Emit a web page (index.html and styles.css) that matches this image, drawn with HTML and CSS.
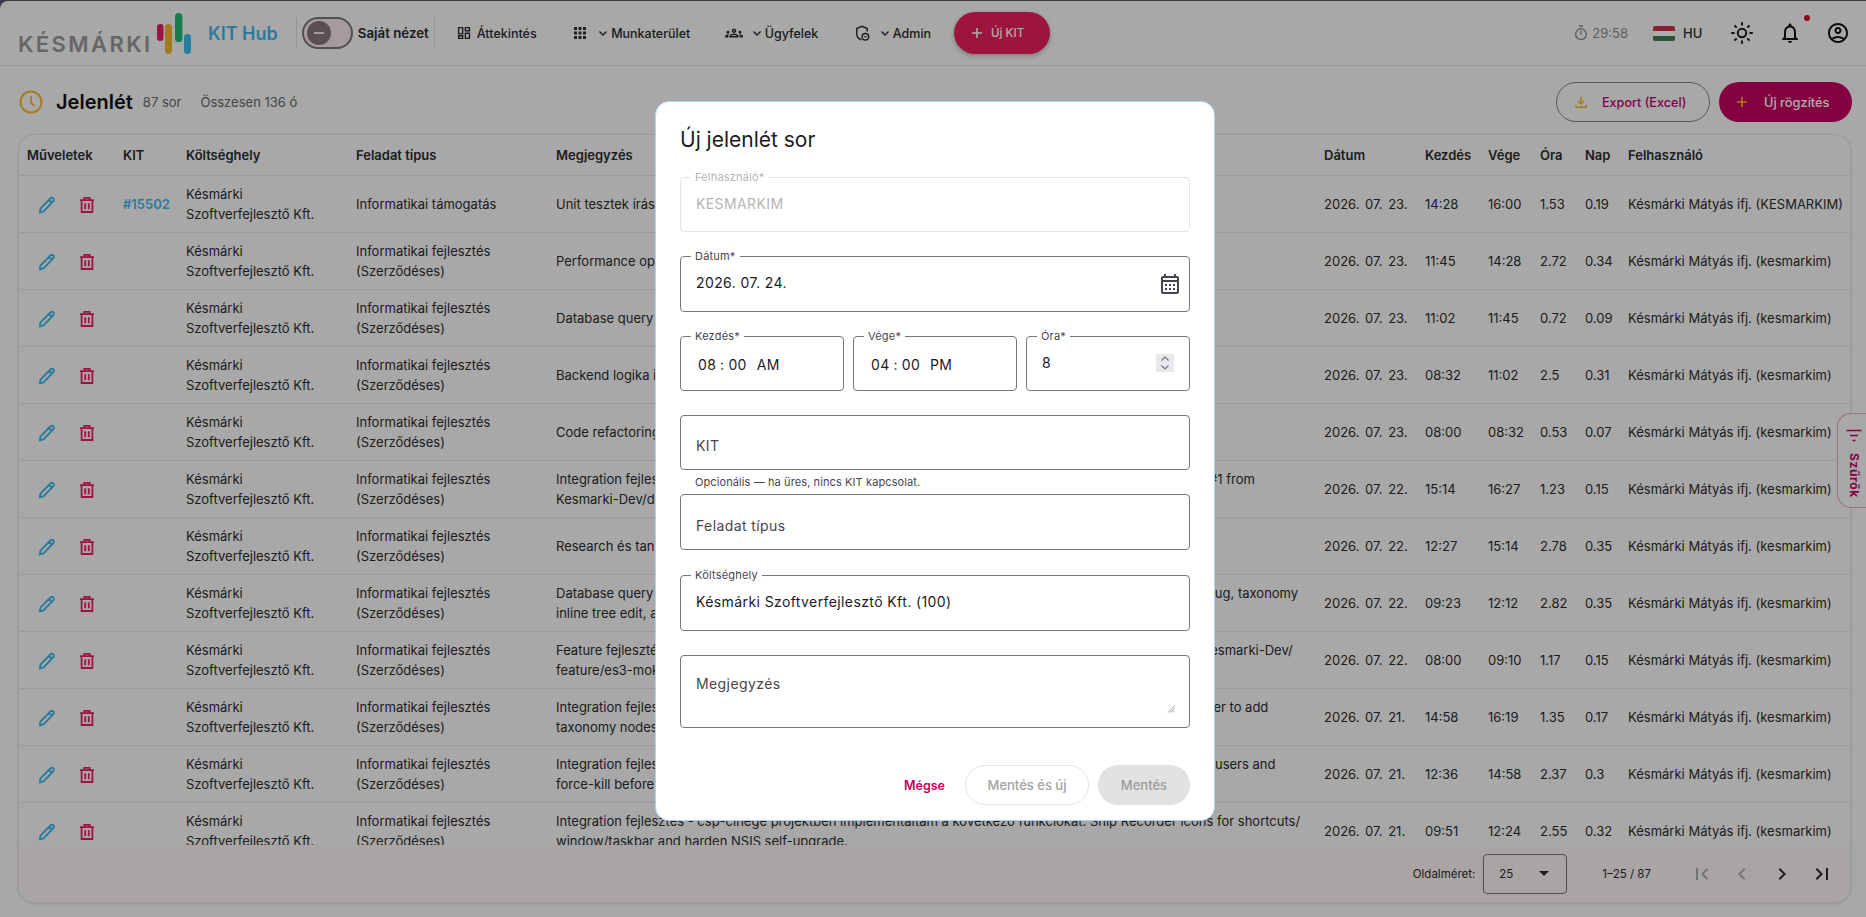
FILE: index.html
```html
<!DOCTYPE html>
<html lang="hu">
<head>
    <meta charset="UTF-8">
    <meta name="viewport" content="width=device-width, initial-scale=1.0">
    <title>Jelenlét - KIT Hub</title>
    <link rel="stylesheet" href="styles.css">
</head>
<body>
    <svg class="icon-defs" aria-hidden="true">
        <symbol id="i-edit" viewBox="0 0 16 16"><path d="M1.6 14.6l.7-3.6L11 2.200c.8-.8 1.900-.8 2.600-.1s.7 1.800-.1 2.600L4.900 13.600z M9.800 3.400l2.900 2.900" fill="none" stroke="currentColor" stroke-width="1.700" stroke-linejoin="round"/></symbol>
        <symbol id="i-trash" viewBox="0 0 16 16"><path d="M3.200 4v10.200h9.600V4 M1.800 3.600h12.400 M5.600 3.400V1.600h4.800v1.800 M6.400 6.400v5.400 M9.600 6.400v5.400" fill="none" stroke="currentColor" stroke-width="1.600"/></symbol>
        <symbol id="i-chev" viewBox="0 0 12 12"><path d="M2.500 4.500L6 8l3.500-3.500" fill="none" stroke="currentColor" stroke-width="1.400"/></symbol>
        <symbol id="i-plus" viewBox="0 0 18 18"><path d="M9 4v10M4 9h10" fill="none" stroke="currentColor" stroke-width="1.600"/></symbol>
    </svg>

    <div class="app">
        <header class="topbar">
            <a class="logo">
                <span class="logo-word">KÉSMÁRKI</span>
                <svg class="logo-bars" viewBox="0 0 34 41">
                    <rect class="bar-red" x="0" y="11" width="6.500" height="17" rx="3.200"/>
                    <rect class="bar-yellow" x="8" y="11" width="7" height="30" rx="3.400"/>
                    <rect class="bar-green" x="18" y="0" width="7.400" height="29" rx="3.600"/>
                    <rect class="bar-blue" x="27" y="21" width="7" height="20" rx="3.400"/>
                </svg>
            </a>
            <span class="app-name">KIT Hub</span>
            <span class="divider divider-first"></span>
            <span class="toggle"><span class="toggle-thumb"></span></span>
            <span class="toggle-label">Saját nézet</span>
            <span class="divider divider-second"></span>
            <nav class="nav">
                <a class="nav-item">
                    <svg class="icon" viewBox="0 0 24 24"><path d="M4.800 4.800h5.400v8.400H4.800z M13.800 4.800h5.400v4.200h-5.400z M13.800 12.400h5.400v6.800h-5.400z M4.800 15.600h5.400v3.600H4.800z" fill="none" stroke="currentColor" stroke-width="1.900"/></svg>
                    <span class="nav-text nav-text-plain">Áttekintés</span>
                </a>
                <a class="nav-item">
                    <svg class="icon" viewBox="0 0 24 24"><path d="M4 8h4V4H4v4zm6 12h4v-4h-4v4zm-6 0h4v-4H4v4zm0-6h4v-4H4v4zm6 0h4v-4h-4v4zm6-10v4h4V4h-4zm-6 4h4V4h-4v4zm6 6h4v-4h-4v4zm0 6h4v-4h-4v4z" fill="currentColor"/></svg>
                    <svg class="chev"><use href="#i-chev"/></svg>
                    <span class="nav-text">Munkaterület</span>
                </a>
                <a class="nav-item">
                    <svg class="icon" viewBox="0 0 24 24"><path d="M4 13c1.100 0 2-.9 2-2s-.9-2-2-2-2 .9-2 2 .9 2 2 2zm1.130 1.100c-.37-.06-.74-.1-1.130-.1-.99 0-1.930.21-2.780.58C.48 14.900 0 15.620 0 16.430V18h4.500v-1.610c0-.83.23-1.610.63-2.290zM20 13c1.100 0 2-.9 2-2s-.9-2-2-2-2 .9-2 2 .9 2 2 2zm4 3.430c0-.81-.48-1.530-1.220-1.850-.85-.37-1.790-.58-2.780-.58-.39 0-.76.04-1.130.1.4.68.63 1.460.63 2.290V18H24v-1.570zm-7.760-2.780c-1.170-.52-2.610-.9-4.240-.9-1.630 0-3.070.39-4.240.9C6.680 14.130 6 15.210 6 16.390V18h12v-1.610c0-1.180-.68-2.260-1.760-2.740zM8.070 16c.09-.23.13-.39.91-.69.97-.38 1.990-.56 3.020-.56s2.050.18 3.020.56c.77.3.81.46.91.69H8.070zM12 8c.55 0 1 .45 1 1s-.45 1-1 1-1-.45-1-1 .45-1 1-1m0-2c-1.660 0-3 1.340-3 3s1.340 3 3 3 3-1.340 3-3-1.340-3-3-3z" fill="currentColor"/></svg>
                    <svg class="chev"><use href="#i-chev"/></svg>
                    <span class="nav-text">Ügyfelek</span>
                </a>
                <a class="nav-item">
                    <svg class="icon" viewBox="0 0 24 24"><path d="M11 21c-3.600-1.200-6-4.600-6-8.400V6l7-3 7 3v4" fill="none" stroke="currentColor" stroke-width="1.900"/><circle cx="16.500" cy="17" r="4.400" fill="none" stroke="currentColor" stroke-width="1.900"/><path d="M14.600 17h3.800" stroke="currentColor" stroke-width="1.600"/></svg>
                    <svg class="chev"><use href="#i-chev"/></svg>
                    <span class="nav-text">Admin</span>
                </a>
            </nav>
            <button class="btn-new-kit"><svg class="btn-icon"><use href="#i-plus"/></svg>Új KIT</button>

            <div class="topbar-right">
                <span class="session">
                    <svg class="session-icon" viewBox="0 0 14 16"><circle cx="7" cy="9.200" r="5.400" fill="none" stroke="currentColor" stroke-width="1.400"/><path d="M4.800 1h4.400M7 5.800v3.600" fill="none" stroke="currentColor" stroke-width="1.400"/></svg>
                    29:58
                </span>
                <svg class="flag" viewBox="0 0 22 15">
                    <rect class="flag-red" width="22" height="5" y="0"/>
                    <rect class="flag-white" width="22" height="5" y="5"/>
                    <rect class="flag-green" width="22" height="5" y="10"/>
                </svg>
                <span class="lang">HU</span>
                <svg class="top-icon top-icon-sun" viewBox="0 0 24 24"><circle cx="12" cy="12" r="4.200" fill="none" stroke="currentColor" stroke-width="1.900"/><path d="M12 1.200v3.400M12 19.400v3.400M1.200 12h3.400M19.400 12h3.400M4.400 4.400l2.300 2.300M17.300 17.300l2.300 2.300M4.400 19.600l2.300-2.300M17.300 6.700l2.300-2.300" fill="none" stroke="currentColor" stroke-width="1.900"/></svg>
                <span class="bell">
                    <svg class="top-icon" viewBox="0 0 24 24"><path d="M12 22c1.100 0 2-.9 2-2h-4c0 1.100.9 2 2 2zm6-6v-5c0-3.070-1.630-5.640-4.500-6.320V4c0-.83-.67-1.500-1.500-1.500s-1.500.67-1.500 1.500v.68C7.640 5.360 6 7.920 6 11v5l-2 2v1h16v-1l-2-2zm-2 1H8v-6c0-2.480 1.510-4.500 4-4.500s4 2.020 4 4.500v6z" fill="currentColor"/></svg>
                    <span class="bell-dot"></span>
                </span>
                <svg class="top-icon" viewBox="0 0 24 24"><path d="M12 2C6.480 2 2 6.480 2 12s4.480 10 10 10 10-4.480 10-10S17.520 2 12 2zM7.350 18.500C8.660 17.560 10.260 17 12 17s3.340.56 4.650 1.500C15.340 19.440 13.740 20 12 20s-3.340-.56-4.650-1.500zm10.790-1.380C16.450 15.800 14.320 15 12 15s-4.450.8-6.140 2.120C4.700 15.730 4 13.950 4 12c0-4.420 3.580-8 8-8s8 3.580 8 8c0 1.950-.7 3.730-1.860 5.120zM12 6c-1.930 0-3.500 1.570-3.500 3.500S10.070 13 12 13s3.500-1.570 3.500-3.500S13.930 6 12 6zm0 5c-.83 0-1.500-.67-1.500-1.500S11.170 8 12 8s1.500.67 1.500 1.500S12.830 11 12 11z" fill="currentColor"/></svg>
            </div>
        </header>

        <main class="page">
            <div class="page-head">
                <div class="page-title">
                    <svg class="title-icon" viewBox="0 0 24 24"><circle cx="12" cy="12" r="10.500" fill="none" stroke="currentColor" stroke-width="2"/><path d="M12 6v6.400l3 3.600" fill="none" stroke="currentColor" stroke-width="1.800"/></svg>
                    <h1>Jelenlét</h1>
                    <span class="page-count">87 sor</span>
                    <span class="page-sum">Összesen 136 ó</span>
                </div>
                <div class="page-actions">
                    <button class="btn-export">
                        <svg class="btn-icon amber" viewBox="0 0 18 18"><path d="M9 3.500v7M6 8l3 3 3-3M4 12v2.200h10V12" fill="none" stroke="currentColor" stroke-width="1.500"/></svg>
                        Export (Excel)
                    </button>
                    <button class="btn-add"><svg class="btn-icon amber"><use href="#i-plus"/></svg>Új rögzítés</button>
                </div>
            </div>

            <section class="card">
                <div class="table-wrap">
                    <table class="grid">
                        <colgroup>
                            <col class="c-act"><col class="c-kit"><col class="c-cost"><col class="c-type"><col class="c-note">
                            <col class="c-date"><col class="c-start"><col class="c-end"><col class="c-hour"><col class="c-day"><col class="c-user">
                        </colgroup>
                        <thead>
                            <tr><th>Műveletek</th><th>KIT</th><th>Költséghely</th><th>Feladat típus</th><th>Megjegyzés</th><th>Dátum</th><th>Kezdés</th><th>Vége</th><th>Óra</th><th>Nap</th><th>Felhasználó</th></tr>
                        </thead>
                        <tbody>
                            <tr>
                                <td class="actions"><svg class="a-edit"><use href="#i-edit"/></svg><svg class="a-del"><use href="#i-trash"/></svg></td>
                                <td><a class="kit-link">#15502</a></td>
                                <td>Késmárki Szoftverfejlesztő Kft.</td>
                                <td>Informatikai támogatás</td>
                                <td>Unit tesztek írása</td>
                                <td>2026. 07. 23.</td><td>14:28</td><td>16:00</td><td>1.53</td><td>0.19</td><td>Késmárki Mátyás ifj. (KESMARKIM)</td>
                            </tr>
                            <tr>
                                <td class="actions"><svg class="a-edit"><use href="#i-edit"/></svg><svg class="a-del"><use href="#i-trash"/></svg></td>
                                <td></td>
                                <td>Késmárki Szoftverfejlesztő Kft.</td>
                                <td>Informatikai fejlesztés (Szerződéses)</td>
                                <td>Performance optimalizálás</td>
                                <td>2026. 07. 23.</td><td>11:45</td><td>14:28</td><td>2.72</td><td>0.34</td><td>Késmárki Mátyás ifj. (kesmarkim)</td>
                            </tr>
                            <tr>
                                <td class="actions"><svg class="a-edit"><use href="#i-edit"/></svg><svg class="a-del"><use href="#i-trash"/></svg></td>
                                <td></td>
                                <td>Késmárki Szoftverfejlesztő Kft.</td>
                                <td>Informatikai fejlesztés (Szerződéses)</td>
                                <td>Database query optimalizálás</td>
                                <td>2026. 07. 23.</td><td>11:02</td><td>11:45</td><td>0.72</td><td>0.09</td><td>Késmárki Mátyás ifj. (kesmarkim)</td>
                            </tr>
                            <tr>
                                <td class="actions"><svg class="a-edit"><use href="#i-edit"/></svg><svg class="a-del"><use href="#i-trash"/></svg></td>
                                <td></td>
                                <td>Késmárki Szoftverfejlesztő Kft.</td>
                                <td>Informatikai fejlesztés (Szerződéses)</td>
                                <td>Backend logika implementálása</td>
                                <td>2026. 07. 23.</td><td>08:32</td><td>11:02</td><td>2.5</td><td>0.31</td><td>Késmárki Mátyás ifj. (kesmarkim)</td>
                            </tr>
                            <tr>
                                <td class="actions"><svg class="a-edit"><use href="#i-edit"/></svg><svg class="a-del"><use href="#i-trash"/></svg></td>
                                <td></td>
                                <td>Késmárki Szoftverfejlesztő Kft.</td>
                                <td>Informatikai fejlesztés (Szerződéses)</td>
                                <td>Code refactoring</td>
                                <td>2026. 07. 23.</td><td>08:00</td><td>08:32</td><td>0.53</td><td>0.07</td><td>Késmárki Mátyás ifj. (kesmarkim)</td>
                            </tr>
                            <tr>
                                <td class="actions"><svg class="a-edit"><use href="#i-edit"/></svg><svg class="a-del"><use href="#i-trash"/></svg></td>
                                <td></td>
                                <td>Késmárki Szoftverfejlesztő Kft.</td>
                                <td>Informatikai fejlesztés (Szerződéses)</td>
                                <td>Integration fejlesztés - csp-cinege projektben implementáltam a következő funkciókat: Merge pull request #1 from<br>Kesmarki-Dev/dev-branch.</td>
                                <td>2026. 07. 22.</td><td>15:14</td><td>16:27</td><td>1.23</td><td>0.15</td><td>Késmárki Mátyás ifj. (kesmarkim)</td>
                            </tr>
                            <tr>
                                <td class="actions"><svg class="a-edit"><use href="#i-edit"/></svg><svg class="a-del"><use href="#i-trash"/></svg></td>
                                <td></td>
                                <td>Késmárki Szoftverfejlesztő Kft.</td>
                                <td>Informatikai fejlesztés (Szerződéses)</td>
                                <td>Research és tanulás</td>
                                <td>2026. 07. 22.</td><td>12:27</td><td>15:14</td><td>2.78</td><td>0.35</td><td>Késmárki Mátyás ifj. (kesmarkim)</td>
                            </tr>
                            <tr>
                                <td class="actions"><svg class="a-edit"><use href="#i-edit"/></svg><svg class="a-del"><use href="#i-trash"/></svg></td>
                                <td></td>
                                <td>Késmárki Szoftverfejlesztő Kft.</td>
                                <td>Informatikai fejlesztés (Szerződéses)</td>
                                <td>Database query optimalizálás - csp-cinege projektben implementáltam a következő funkciókat: Fix router slug, taxonomy<br>inline tree edit, and related fixes.</td>
                                <td>2026. 07. 22.</td><td>09:23</td><td>12:12</td><td>2.82</td><td>0.35</td><td>Késmárki Mátyás ifj. (kesmarkim)</td>
                            </tr>
                            <tr>
                                <td class="actions"><svg class="a-edit"><use href="#i-edit"/></svg><svg class="a-del"><use href="#i-trash"/></svg></td>
                                <td></td>
                                <td>Késmárki Szoftverfejlesztő Kft.</td>
                                <td>Informatikai fejlesztés (Szerződéses)</td>
                                <td>Feature fejlesztés - csp-cinege projektben implementáltam a következő funkciókat: Merge pull #311 from Kesmarki-Dev/<br>feature/es3-mokup.</td>
                                <td>2026. 07. 22.</td><td>08:00</td><td>09:10</td><td>1.17</td><td>0.15</td><td>Késmárki Mátyás ifj. (kesmarkim)</td>
                            </tr>
                            <tr>
                                <td class="actions"><svg class="a-edit"><use href="#i-edit"/></svg><svg class="a-del"><use href="#i-trash"/></svg></td>
                                <td></td>
                                <td>Késmárki Szoftverfejlesztő Kft.</td>
                                <td>Informatikai fejlesztés (Szerződéses)</td>
                                <td>Integration fejlesztés - csp-cinege projektben implementáltam a következő funkciókat: Extend the tree helper to add<br>taxonomy nodes.</td>
                                <td>2026. 07. 21.</td><td>14:58</td><td>16:19</td><td>1.35</td><td>0.17</td><td>Késmárki Mátyás ifj. (kesmarkim)</td>
                            </tr>
                            <tr>
                                <td class="actions"><svg class="a-edit"><use href="#i-edit"/></svg><svg class="a-del"><use href="#i-trash"/></svg></td>
                                <td></td>
                                <td>Késmárki Szoftverfejlesztő Kft.</td>
                                <td>Informatikai fejlesztés (Szerződéses)</td>
                                <td>Integration fejlesztés - csp-cinege projektben implementáltam a következő funkciókat: Stop all the running-users and<br>force-kill before update.</td>
                                <td>2026. 07. 21.</td><td>12:36</td><td>14:58</td><td>2.37</td><td>0.3</td><td>Késmárki Mátyás ifj. (kesmarkim)</td>
                            </tr>
                            <tr>
                                <td class="actions"><svg class="a-edit"><use href="#i-edit"/></svg><svg class="a-del"><use href="#i-trash"/></svg></td>
                                <td></td>
                                <td>Késmárki Szoftverfejlesztő Kft.</td>
                                <td>Informatikai fejlesztés (Szerződéses)</td>
                                <td>Integration fejlesztés - csp-cinege projektben implementáltam a következő funkciókat: Ship Recorder icons for shortcuts/<br>window/taskbar and harden NSIS self-upgrade.</td>
                                <td>2026. 07. 21.</td><td>09:51</td><td>12:24</td><td>2.55</td><td>0.32</td><td>Késmárki Mátyás ifj. (kesmarkim)</td>
                            </tr>
                        </tbody>
                    </table>
                </div>
                <footer class="pager">
                    <span class="pager-label">Oldalméret:</span>
                    <span class="pager-select">25<span class="caret"></span></span>
                    <span class="pager-range">1–25 / 87</span>
                    <span class="pager-buttons">
                        <svg class="pager-btn off" viewBox="0 0 24 24"><path d="M18.410 16.590L13.820 12l4.590-4.590L17 6l-6 6 6 6zM6 6h2v12H6z" fill="currentColor"/></svg>
                        <svg class="pager-btn off" viewBox="0 0 24 24"><path d="M15.410 7.410L14 6l-6 6 6 6 1.410-1.410L10.830 12z" fill="currentColor"/></svg>
                        <svg class="pager-btn" viewBox="0 0 24 24"><path d="M10 6L8.590 7.410 13.170 12l-4.580 4.590L10 18l6-6z" fill="currentColor"/></svg>
                        <svg class="pager-btn" viewBox="0 0 24 24"><path d="M5.590 7.410L10.180 12l-4.590 4.590L7 18l6-6-6-6zM16 6h2v12h-2z" fill="currentColor"/></svg>
                    </span>
                </footer>
            </section>
        </main>

        <aside class="filter-tab">
            <svg class="filter-icon" viewBox="0 0 18 18"><path d="M1.500 3.500h15M5 8.500h8M7.500 13.500h3" fill="none" stroke="currentColor" stroke-width="1.600"/></svg>
            <span class="filter-text">Szűrők</span>
        </aside>
    </div>

    <div class="backdrop">
        <div class="dialog">
            <h2>Új jelenlét sor</h2>

            <div class="field disabled">
                <label>Felhasználó*</label>
                <span class="value">KESMARKIM</span>
            </div>

            <div class="field">
                <label>Dátum*</label>
                <span class="value">2026. 07. 24.</span>
                <svg class="cal-icon" viewBox="0 0 24 24"><path d="M19 4h-1V2h-2v2H8V2H6v2H5c-1.100 0-2 .9-2 2v14c0 1.100.9 2 2 2h14c1.100 0 2-.9 2-2V6c0-1.100-.9-2-2-2zm0 16H5V10h14v10zm0-12H5V6h14v2zM9 14H7v-2h2v2zm4 0h-2v-2h2v2zm4 0h-2v-2h2v2zm-8 4H7v-2h2v2zm4 0h-2v-2h2v2zm4 0h-2v-2h2v2z" fill="currentColor"/></svg>
            </div>

            <div class="time-row">
                <div class="field">
                    <label>Kezdés*</label>
                    <span class="time"><span>08</span><span>:</span><span>00</span><span class="ampm">AM</span></span>
                </div>
                <div class="field">
                    <label>Vége*</label>
                    <span class="time"><span>04</span><span>:</span><span>00</span><span class="ampm">PM</span></span>
                </div>
                <div class="field">
                    <label>Óra*</label>
                    <span class="value">8</span>
                    <span class="spinner">
                        <svg viewBox="0 0 18 18"><path d="M5.500 6.500L9 3l3.500 3.500M5.500 11.500L9 15l3.500-3.500" fill="none" stroke="currentColor" stroke-width="1.200"/></svg>
                    </span>
                </div>
            </div>

            <div class="field field-hinted">
                <span class="placeholder">KIT</span>
            </div>
            <div class="hint">Opcionális — ha üres, nincs KIT kapcsolat.</div>

            <div class="field field-task">
                <span class="placeholder">Feladat típus</span>
            </div>

            <div class="field">
                <label>Költséghely</label>
                <span class="value">Késmárki Szoftverfejlesztő Kft. (100)</span>
            </div>

            <div class="field field-area">
                <span class="placeholder">Megjegyzés</span>
                <svg class="resize" viewBox="0 0 8 8"><path d="M7.500 1L1 7.500M7.500 3.500L3.500 7.500M7.500 6L6 7.500" stroke="currentColor" stroke-width="1"/></svg>
            </div>

            <div class="dialog-actions">
                <button class="btn-cancel">Mégse</button>
                <button class="btn-save-new">Mentés és új</button>
                <button class="btn-save">Mentés</button>
            </div>
        </div>
    </div>
</body>
</html>
```

FILE: styles.css
```css
* {
    box-sizing: border-box;
}

html, body {
    height: 100%;
}

body {
    margin: 0;
    overflow: hidden;
    font-family: Inter, "Noto Sans", sans-serif;
    font-size: 13px;
    color: #2b2b2b;
    background-color: #57576e;
}

button {
    font-family: inherit;
    cursor: pointer;
}

.icon-defs {
    display: none;
}

.app {
    position: relative;
    height: 916px;
    margin-top: 1px;
    background-color: #f8f8f8;
    border-top-left-radius: 8px;
    overflow: hidden;
}

/* top bar */
.topbar {
    display: flex;
    align-items: center;
    height: 65px;
    padding: 0 16px 0 18px;
    border-bottom: 1px solid #e2e2e2;
}

.logo {
    display: flex;
    align-items: flex-end;
    height: 41px;
    width: 173px;
    gap: 6px;
}

.logo-word {
    width: 133px;
    font-weight: 600;
    font-size: 22px;
    line-height: 20px;
    letter-spacing: 2.4px;
    color: #979797;
    white-space: nowrap;
}

.logo-bars {
    width: 34px;
    height: 41px;
    flex: none;
}

.bar-red { fill: #e01f63; }
.bar-yellow { fill: #f2b62a; }
.bar-green { fill: #22b877; }
.bar-blue { fill: #3bb9ea; }

.app-name {
    margin-left: 17px;
    font-size: 18px;
    font-weight: 600;
    color: #40b4e8;
    white-space: nowrap;
}

.divider {
    width: 1px;
    height: 31px;
    background-color: #dcdcdc;
}

.divider-first {
    margin-left: 18px;
}

.toggle {
    display: flex;
    align-items: center;
    width: 51px;
    height: 32px;
    margin-left: 5px;
    padding-left: 3px;
    border: 2px solid #79747e;
    border-radius: 16px;
    background-color: #f3e3e6;
}

.toggle-thumb {
    position: relative;
    width: 24px;
    height: 24px;
    border-radius: 50%;
    background-color: #80757a;
}

.toggle-thumb::after {
    content: "";
    position: absolute;
    left: 7px;
    top: 11px;
    width: 10px;
    height: 2px;
    background-color: #f3e3e6;
}

.toggle-label {
    margin-left: 5px;
    font-size: 13.300px;
    font-weight: 600;
    white-space: nowrap;
}

.divider-second {
    margin-left: 5px;
}

.nav {
    display: flex;
    align-items: center;
    margin-left: 20px;
    gap: 34.500px;
}

.nav-item {
    display: flex;
    align-items: center;
    font-size: 12.500px;
    font-weight: 500;
    white-space: nowrap;
}

.icon {
    width: 18px;
    height: 18px;
    flex: none;
}

.chev {
    width: 12px;
    height: 12px;
    margin: 0 2px 0 8px;
}

.nav-text-plain {
    margin-left: 4px;
}

.btn-new-kit {
    display: flex;
    align-items: center;
    width: 96px;
    height: 42px;
    margin-left: 23px;
    padding: 0 0 0 14px;
    border: none;
    border-radius: 21px;
    background-color: #e81f5c;
    color: #fff;
    font-size: 11.500px;
    font-weight: 500;
    box-shadow: 0 2px 5px rgba(0,0,0,0.25);
}

.btn-icon {
    width: 18px;
    height: 18px;
    margin-right: 5px;
    flex: none;
}

.amber {
    color: #f4b731;
}

.topbar-right {
    display: flex;
    align-items: center;
    margin-left: auto;
}

.session {
    display: flex;
    align-items: center;
    gap: 4px;
    font-size: 13px;
    color: #8c8c8c;
}

.session-icon {
    width: 14px;
    height: 16px;
}

.flag {
    width: 22px;
    height: 15px;
    margin-left: 25px;
    border-radius: 2px;
}

.flag-red { fill: #c8334a; }
.flag-white { fill: #ffffff; }
.flag-green { fill: #3f7a50; }

.lang {
    margin-left: 8px;
    font-weight: 500;
    width: 18px;
}

.top-icon {
    display: block;
    width: 24px;
    height: 24px;
    color: #111;
}

.top-icon-sun {
    margin: 0 24px 0 29px;
}

.bell {
    position: relative;
    margin-right: 24px;
}

.bell-dot {
    position: absolute;
    right: -8px;
    top: -6px;
    width: 6px;
    height: 6px;
    border-radius: 50%;
    background-color: #d6002a;
}

/* page */
.page {
    padding: 16px 14px 0 18px;
}

.page-head {
    display: flex;
    justify-content: space-between;
    align-items: center;
    height: 40px;
    margin-bottom: 12px;
}

.page-title {
    display: flex;
    align-items: center;
    margin-left: 1px;
}

.title-icon {
    width: 24px;
    height: 24px;
    color: #f4b731;
}

h1 {
    margin: 0 0 0 13px;
    font-size: 20px;
    font-weight: 600;
    color: #111;
}

.page-count {
    margin-left: 10px;
    color: #666;
}

.page-sum {
    margin-left: 19px;
    color: #666;
}

.page-actions {
    display: flex;
    gap: 9px;
}

.btn-export, .btn-add {
    display: flex;
    align-items: center;
    height: 40px;
    border-radius: 20px;
    font-weight: 500;
    white-space: nowrap;
}

.btn-export {
    width: 154px;
    padding: 0 0 0 15px;
    border: 1px solid #8a7f82;
    background: transparent;
    color: #bd0070;
    font-size: 12.600px;
}

.btn-export .btn-icon {
    margin-right: 12px;
}

.btn-add {
    width: 133px;
    padding: 0 0 0 14px;
    border: none;
    background-color: #c4005e;
    color: #fff;
    font-size: 12.800px;
}

.btn-add .btn-icon {
    margin-right: 13px;
}

/* table card */
.card {
    display: flex;
    flex-direction: column;
    height: 769px;
    margin-right: 1px;
    border: 1px solid #e4e4e4;
    border-radius: 16px;
    background-color: #f8f8f8;
    overflow: hidden;
    box-shadow: 0 1px 3px rgba(0,0,0,0.12);
}

.table-wrap {
    height: 711px;
    overflow: hidden;
}

.grid {
    width: 100%;
    table-layout: fixed;
    border-collapse: separate;
    border-spacing: 0;
}

.c-act { width: 96px; }
.c-kit { width: 63px; }
.c-cost { width: 170px; }
.c-type { width: 200px; }
.c-note { width: 768px; }
.c-date { width: 101px; }
.c-start { width: 63px; }
.c-end { width: 52px; }
.c-hour { width: 45px; }
.c-day { width: 43px; }
.c-user { width: auto; }

.grid th {
    height: 41px;
    padding: 0 8px;
    text-align: left;
    font-weight: 600;
    white-space: nowrap;
    border-bottom: 1px solid #e4e4e4;
}

.grid td {
    height: 57px;
    padding: 0 8px;
    line-height: 20px;
    border-bottom: 1px solid #e4e4e4;
}

.grid td:nth-child(6) {
    word-spacing: 2px;
    white-space: nowrap;
}

.grid td:last-child {
    white-space: nowrap;
}

.actions {
    white-space: nowrap;
}

.a-edit, .a-del {
    display: inline-block;
    width: 18px;
    height: 18px;
    vertical-align: middle;
}

.a-edit {
    margin-left: 11px;
    color: #3fb4e6;
}

.a-del {
    margin-left: 22px;
    color: #e81f5c;
}

.kit-link {
    color: #3fb4e6;
    font-weight: 600;
}

.pager {
    display: flex;
    align-items: center;
    justify-content: flex-end;
    height: 57px;
    padding-right: 8px;
    background-color: #faf3f3;
}

.pager-label {
    font-size: 11.500px;
}

.pager-select {
    display: flex;
    align-items: center;
    justify-content: space-between;
    width: 84px;
    height: 40px;
    margin-left: 8px;
    padding: 0 17px 0 15px;
    border: 1px solid #79747e;
    border-radius: 4px;
    font-size: 11.500px;
}

.caret {
    width: 0;
    height: 0;
    border-left: 5px solid transparent;
    border-right: 5px solid transparent;
    border-top: 5px solid #2b2b2b;
}

.pager-range {
    margin-left: 35px;
    font-size: 11.500px;
}

.pager-buttons {
    display: flex;
    align-items: center;
    margin-left: 31px;
}

.pager-btn {
    width: 40px;
    height: 24px;
}

.pager-btn.off {
    color: #aaa;
}

.filter-tab {
    position: absolute;
    right: 0;
    top: 412px;
    display: flex;
    flex-direction: column;
    align-items: center;
    width: 29px;
    height: 95px;
    padding: 13px 0 0 4px;
    border: 1px solid #e4a8c0;
    border-right: none;
    border-radius: 14px 0 0 14px;
    background-color: #f8f8f8;
    color: #c4005e;
}

.filter-icon {
    width: 18px;
    height: 18px;
    flex: none;
}

.filter-text {
    margin-top: 8px;
    writing-mode: vertical-rl;
    font-size: 12px;
    font-weight: 700;
    letter-spacing: 0.6px;
}

/* dialog */
.backdrop {
    position: fixed;
    top: 0;
    left: 0;
    right: 0;
    bottom: 0;
    display: flex;
    align-items: center;
    justify-content: center;
    padding: 5px 0 0 4px;
    background-color: rgba(0,0,0,0.32);
}

.dialog {
    width: 560px;
    padding: 24px 24px 15px;
    border: 1px solid #a5d8ee;
    border-radius: 14px;
    background-color: #fff;
    color: #1c1b1f;
}

h2 {
    margin: 0 0 23px;
    font-size: 21px;
    line-height: 28px;
    font-weight: 400;
}

.field {
    position: relative;
    display: flex;
    align-items: center;
    justify-content: space-between;
    height: 55.400px;
    margin-bottom: 24px;
    padding: 0 15px;
    border: 1px solid #79747e;
    border-radius: 4px;
    font-size: 14px;
    letter-spacing: 0.4px;
}

.field label {
    position: absolute;
    left: 10px;
    top: -7px;
    padding: 0 4px;
    font-size: 11px;
    line-height: 13px;
    letter-spacing: 0.2px;
    color: #49454f;
    background-color: #fff;
}

.field .value {
    padding-bottom: 2px;
}

.field.disabled {
    border-color: #e3e3e3;
    color: #b5b5b5;
}

.field.disabled label {
    color: #b5b5b5;
}

.placeholder {
    padding-top: 6px;
    color: #49454f;
}

.cal-icon {
    width: 24px;
    height: 24px;
    margin-right: -8px;
    color: #49454f;
}

.time-row {
    display: flex;
    gap: 9px;
}

.time-row .field {
    flex: 1 1 0;
}

.time {
    display: flex;
    gap: 4px;
    padding: 3px 0 0 2px;
    letter-spacing: 0.3px;
}

.ampm {
    margin-left: 6px;
}

.spinner {
    display: block;
    width: 18px;
    height: 18px;
    background-color: #e9e9ed;
    color: #777;
}

.spinner svg {
    display: block;
}

.field-hinted {
    margin-bottom: 0;
}

.hint {
    height: 24px;
    padding-left: 15px;
    font-size: 11px;
    line-height: 24px;
    letter-spacing: 0.1px;
    color: #49454f;
}

.field-task {
    margin-bottom: 25.500px;
}

.field-area {
    height: 73.600px;
    margin-bottom: 37px;
}

.field-area .placeholder {
    padding: 0 0 15px;
}

.resize {
    position: absolute;
    right: 14px;
    bottom: 14px;
    width: 8px;
    height: 8px;
    color: #999;
}

.dialog-actions {
    display: flex;
    align-items: center;
    justify-content: flex-end;
    gap: 9px;
}

.dialog-actions button {
    height: 40px;
    border-radius: 20px;
    font-size: 13px;
    font-weight: 500;
}

.dialog-actions .btn-cancel {
    margin-right: 11px;
    padding: 0;
    border: none;
    background: transparent;
    color: #c4005e;
    font-size: 12.500px;
    font-weight: 600;
}

.btn-save-new {
    width: 124px;
    border: 1px solid #e6e6e6;
    background: #fff;
    color: #a3a3a3;
}

.btn-save {
    width: 92px;
    border: none;
    background-color: #e2e2e2;
    color: #9c9c9c;
}
```
